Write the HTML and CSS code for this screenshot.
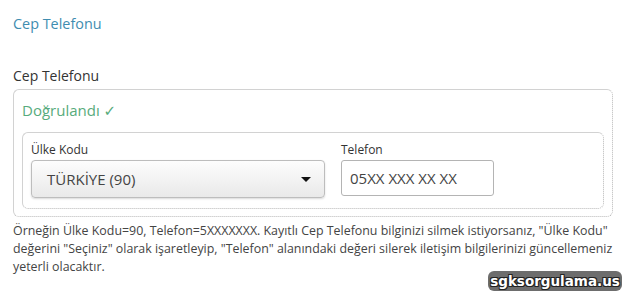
FILE: index.html
```html
<!DOCTYPE html>
<html lang="tr">
<head>
<meta charset="utf-8">
<title>Cep Telefonu</title>
<link rel="stylesheet" href="styles.css">
</head>
<body>
<div class="page">
  <h1 class="title">Cep Telefonu</h1>
  <div class="section-label">Cep Telefonu</div>
  <div class="outer-box">
    <div class="verified">Doğrulandı ✓</div>
    <div class="inner-box">
      <div class="field field-country">
        <label class="field-label">Ülke Kodu</label>
        <div class="select">
          <span class="select-text">TÜRKİYE (90)</span>
          <span class="caret"></span>
        </div>
      </div>
      <div class="field field-phone">
        <label class="field-label">Telefon</label>
        <div class="input">05XX XXX XX XX</div>
      </div>
    </div>
  </div>
  <p class="note">Örneğin Ülke Kodu=90, Telefon=5XXXXXXX. Kayıtlı Cep Telefonu bilginizi silmek istiyorsanız, "Ülke Kodu" değerini "Seçiniz" olarak işaretleyip, "Telefon" alanındaki değeri silerek iletişim bilgilerinizi güncellemeniz yeterli olacaktır.</p>
</div>
<div class="watermark">sgksorgulama.us</div>
</body>
</html>
```
FILE: styles.css
```css
html, body {
  margin: 0;
  padding: 0;
  background: #ffffff;
}
body {
  font-family: "Open Sans", "DejaVu Sans", sans-serif;
  color: #333;
  position: relative;
  width: 628px;
  height: 295px;
  overflow: hidden;
}
.page {
  padding: 14px 15px 0 13px;
}
.title {
  margin: 0;
  font-size: 14.4px;
  font-weight: 400;
  line-height: 20px;
  color: #3f8db0;
}
.section-label {
  margin-top: 32px;
  font-size: 14px;
  line-height: 20px;
  color: #333;
}
.outer-box {
  margin-top: 3px;
  width: 600px;
  box-sizing: border-box;
  border-top: 1px solid #d2d2d2;
  border-left: 1px solid #d2d2d2;
  border-right: 1px dotted #b8b8b8;
  border-bottom: 1px dotted #b8b8b8;
  border-radius: 6px;
  padding: 9px 8px 7px 8px;
}
.verified {
  font-size: 15px;
  line-height: 22px;
  color: #57ab7c;
}
.inner-box {
  margin-top: 11px;
  box-sizing: border-box;
  width: 582px;
  border-top: 1px solid #d2d2d2;
  border-left: 1px solid #d2d2d2;
  border-right: 1px dotted #b8b8b8;
  border-bottom: 1px dotted #b8b8b8;
  border-radius: 6px;
  padding: 8px 8px 10px 8px;
  display: flex;
  gap: 16px;
  align-items: flex-start;
}
.field {
  display: flex;
  flex-direction: column;
}
.field-label {
  font-size: 12px;
  line-height: 18px;
  color: #333;
  margin-bottom: 1px;
}
.select {
  box-sizing: border-box;
  width: 294px;
  height: 38px;
  border: 1px solid #bdbdbd;
  border-radius: 4px;
  background: linear-gradient(#fdfdfd, #e9e9e9);
  box-shadow: 0 1px 2px rgba(0,0,0,0.15);
  display: flex;
  align-items: center;
  padding: 0 12px 0 15px;
}
.select-text {
  flex: 1;
  font-size: 15px;
  color: #444;
}
.caret {
  width: 0;
  height: 0;
  border-left: 5px solid transparent;
  border-right: 5px solid transparent;
  border-top: 5px solid #111;
  margin-right: 1px;
}
.input {
  box-sizing: border-box;
  width: 153px;
  height: 36px;
  border: 1px solid #b4b4b4;
  border-radius: 3px;
  background: #fff;
  display: flex;
  align-items: center;
  padding: 0 8px;
  font-size: 15px;
  color: #444;
}
.note {
  margin: 5px 0 0 0;
  font-size: 12.4px;
  line-height: 18px;
  color: #444;
  width: 600px;
}
.watermark {
  position: absolute;
  left: 488px;
  top: 271px;
  width: 134px;
  height: 20px;
  box-sizing: border-box;
  background: #6d6d6d;
  border-radius: 6px;
  color: #fff;
  font-family: "DejaVu Sans", "Verdana", sans-serif;
  font-weight: 700;
  font-size: 13.5px;
  line-height: 20px;
  text-align: center;
  text-shadow: 1px 1px 0 #222, -1px -1px 0 #222, 1px -1px 0 #222, -1px 1px 0 #222;
}
```
